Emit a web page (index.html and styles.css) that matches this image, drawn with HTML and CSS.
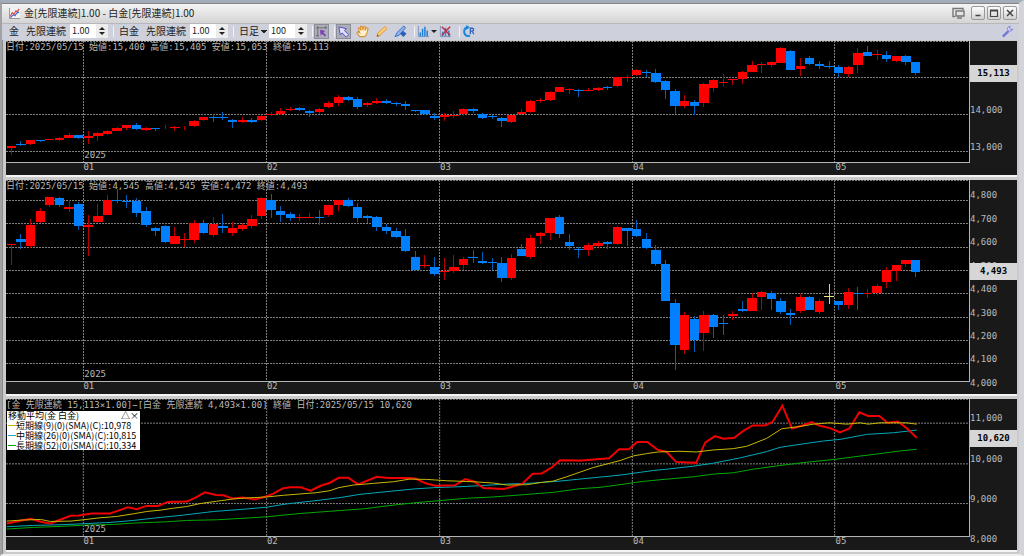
FILE: index.html
```html
<!DOCTYPE html>
<html lang="ja">
	<head>
		<meta charset="UTF-8">
		<title>金[先限連続]1.00 - 白金[先限連続]1.00</title>
		<link rel="stylesheet" href="styles.css">
	</head>
	<body>
		<div class="window">
			<div class="titlebar">
				<svg class="appIcon" viewBox="0 0 12 12">
					<rect x="0" y="0" width="12" height="12" fill="#f2f2f6"/>
					<path d="M.5 0v11.5H12" fill="none" stroke="#8a8a92"/>
					<path d="M1.500 9l2-4 2 2 2-4 1.500 1L11 1" fill="none" stroke="#d8452f" stroke-width="1.200"/>
					<path d="M1.500 10.500l3-3 2 1 2-3 2.500-1" fill="none" stroke="#3b62d8" stroke-width="1.200"/>
				</svg>
				<h1>金[先限連続]1.00 - 白金[先限連続]1.00</h1>
				<button class="dock" title="切り離し">
					<svg viewBox="0 0 13 12"><path d="M3 9.500H1v-8h10v1.500M4 4h8v5H4zM5 11h5" fill="none" stroke="#77777a" stroke-width="1.400"/></svg>
				</button>
				<button class="winBtn" title="最小化">
					<svg viewBox="0 0 12 12"><path d="M3.500 8.500h5" stroke="#444" stroke-width="1.500"/></svg>
				</button>
				<button class="winBtn" title="最大化">
					<svg viewBox="0 0 12 12"><path d="M2.500 3h7v6.500h-7z M2.500 3.800h7" fill="none" stroke="#444" stroke-width="1.200"/></svg>
				</button>
				<button class="winBtn" title="閉じる">
					<svg viewBox="0 0 12 12"><path d="M3 3l6 6M9 3l-6 6" stroke="#444" stroke-width="1.500"/></svg>
				</button>
			</div>

			<div class="toolbar">
				<span class="name">金</span>
				<label for="gold">先限連続</label>
				<span class="spin">
					<input type="text" id="gold" value="1.00">
					<span class="arrows"><button title="増"></button><button class="down" title="減"></button></span>
				</span>
				<i class="sep"></i>
				<span class="name">白金</span>
				<label for="plat">先限連続</label>
				<span class="spin">
					<input type="text" id="plat" value="1.00">
					<span class="arrows"><button title="増"></button><button class="down" title="減"></button></span>
				</span>
				<i class="sep"></i>
				<select class="period" aria-label="足種"><option>日足</option></select>
				<span class="spin">
					<input type="text" id="bars" value="100" aria-label="本数">
					<span class="arrows"><button title="増"></button><button class="down" title="減"></button></span>
				</span>
				<i class="sep"></i>
				<button class="tool on" title="カーソル">
					<svg viewBox="0 0 14 14">
						<path d="M1 3h12M3 1v12M1 11.500h3M11.500 1v3" fill="none" stroke="#6a6a78"/>
						<path d="M5.500 5l5.500 1.500-2 1.500 3 3-1.500 1.500-3-3-1.500 2z" fill="#7a3fb8"/>
					</svg>
				</button>
				<i class="sep"></i>
				<button class="tool on" title="選択">
					<svg viewBox="0 0 14 14"><path d="M2 2l8 2-2 2 4.500 4.500-2.500 2.500-4.500-4.500-2 2z" fill="#dfe2ff" stroke="#4f46c4"/></svg>
				</button>
				<button class="tool" title="移動">
					<svg viewBox="0 0 14 14"><path d="M4 12.500L1 8.500l1-1.500 2 1.500-1.500-5 1.500-.5L5.500 6 5 1.500h1.500L7.500 5.500 8.500 1.500l1.500.5-.3 4L11.500 3l1.500.8-1.500 6-2 2.700z" fill="#fff1d2" stroke="#dc9232" stroke-width="1.200"/></svg>
				</button>
				<button class="tool" title="描画">
					<svg viewBox="0 0 14 14"><path d="M2 12.500l1-4L10.500 1.500l2.500 2.500L5.500 11z" fill="#f9c878" stroke="#e09a35"/><path d="M2 12.500l.6-2.500L4.500 12z" fill="#6b5a48"/></svg>
				</button>
				<button class="tool" title="図形編集">
					<svg viewBox="0 0 14 14"><path d="M1 12.500l2.500-4.500L10.500 1l2 2-7 8z" fill="#8db4ee" stroke="#3768c4"/><path d="M10 6.500l3.500 3-3.500 3.500-3.500-3.500z" fill="#2861b8"/></svg>
				</button>
				<i class="sep"></i>
				<button class="tool menu" title="指標">
					<svg viewBox="0 0 14 14"><path d="M1.500 1v11.500H13" fill="none" stroke="#7b93b8"/><path d="M3.500 8v4M6 4v8M8.500 2v10M11 6v6" stroke="#1f7fd6" stroke-width="1.600"/></svg>
				</button>
				<button class="tool" title="指標削除">
					<svg viewBox="0 0 14 14"><path d="M1.500 1v11.500H13" fill="none" stroke="#7b93b8"/><path d="M4 7v5M7 3v9M10.500 6v6" stroke="#3c86d4" stroke-width="1.800"/><path d="M3 2l9 9M12 2l-9 9" stroke="#c4283c" stroke-width="1.500"/></svg>
				</button>
				<i class="sep"></i>
				<button class="tool" title="更新">
					<svg viewBox="0 0 14 14"><path d="M6 2.500C2 3 1.500 8 3.500 10.500 5 12 7 12 8.500 11.500" fill="none" stroke="#1a86dc" stroke-width="2.200"/><path d="M4.500 0l4 2.500-4 3z" fill="#1a86dc"/><path d="M9 10V3.500h2q1.500 0 1.500 1.500T11 6.500H9M11 6.500l1.700 3.500" fill="none" stroke="#2b63c0" stroke-width="1.400"/></svg>
				</button>
				<button class="tool setting" title="設定">
					<svg viewBox="0 0 14 14"><path d="M2 12.500L8 6.500" stroke="#7477d8" stroke-width="2.600"/><path d="M10 1.500C7 1.500 6.500 4 7.500 5.500c1 1.800 4.500 1.500 5-1.300L10.500 5 9 3.600z" fill="#dfe0fb" stroke="#7477d8"/></svg>
				</button>
			</div>

			<div class="charts">
				<div class="chart chart1">
					<div class="plot" id="plot1">
						<p class="quote">日付:2025/05/15 始値:15,400 高値:15,405 安値:15,053 終値:15,113</p>
					</div>
					<div class="price" id="price1"></div>
					<div class="months" id="months1"></div>
				</div>
				<div class="chart chart2">
					<div class="plot" id="plot2">
						<p class="quote">日付:2025/05/15 始値:4,545 高値:4,545 安値:4,472 終値:4,493</p>
					</div>
					<div class="price" id="price2"></div>
					<div class="months" id="months2"></div>
				</div>
				<div class="chart chart3">
					<div class="plot" id="plot3">
						<p class="quote">[金 先限連続 15,113×1.00]−[白金 先限連続 4,493×1.00] 終値 日付:2025/05/15 10,620</p>
						<div class="legend">
							<p class="head">移動平均(金 白金)<span>△×</span></p>
							<p class="short">短期線(9)(0)(SMA)(C):10,978</p>
							<p class="mid">中期線(26)(0)(SMA)(C):10,815</p>
							<p class="long">長期線(52)(0)(SMA)(C):10,334</p>
						</div>
					</div>
					<div class="price" id="price3"></div>
					<div class="months" id="months3"></div>
				</div>
			</div>
		</div>
		<script src="chart.js"></script>
	</body>
</html>
```

FILE: styles.css
```css
*{
	margin: 0;
	padding: 0;
	box-sizing: border-box;
}
body{
	height: 100vh;
	background: #d3d4da;
	font-family: "Noto Sans CJK JP", sans-serif;
	font-size: 10px;
	color: #222;
}
button{
	padding: 0;
	border: 0;
	background: none;
	font: inherit;
}
svg{
	display: block;
}
.window{
	height: 100vh;
	min-height: 400px;
	display: flex;
	flex-direction: column;
	border-top: 3px solid #a4abb8;
	border-left: 2px solid #a2a2a6;
	border-right: 5px solid #d3d4da;
	border-bottom: 2px solid #f0f0f0;
}
/* タイトルバー */
.titlebar{
	height: 20px;
	flex: none;
	display: flex;
	align-items: center;
	padding: 0 2px 1px 7px;
	border-top: 1px solid #858585;
	background: linear-gradient(#f4f4f4, #d4d4d4);
}
.appIcon{
	width: 11px;
	height: 11px;
	margin-right: 4px;
}
.titlebar h1{
	flex: 1;
	font-size: 10px;
	font-weight: 400;
	line-height: 14px;
}
.titlebar .dock{
	width: 13px;
	margin-right: 4px;
}
.winBtn{
	width: 14px;
	height: 14px;
	margin-left: 2px;
	border: 1px solid #999;
	border-radius: 2px;
	background: linear-gradient(#fdfdfd, #d0d0d0);
}
/* ツールバー */
.toolbar{
	height: 17px;
	flex: none;
	display: flex;
	align-items: center;
	padding: 0 4px 2px 7px;
	border-top: 1px solid #b8b8bc;
	background: #ced1dc;
	line-height: 14px;
}
.toolbar .name{
	margin-right: 7px;
}
.toolbar label{
	margin-right: 4px;
}
.spin{
	display: flex;
	width: 38px;
	height: 14px;
	background: #fff;
}
.spin input{
	width: 26px;
	padding-left: 2px;
	border: 0;
	background: #fff;
	font: inherit;
	font-size: 9px;
	color: #222;
}
.arrows{
	width: 12px;
	display: flex;
	flex-direction: column;
	justify-content: center;
	gap: 2px;
	background: #ececec;
}
.arrows button::after{
	content: "";
	display: block;
	width: 0;
	margin: 0 auto;
	border: 3px solid transparent;
	border-top-width: 0;
	border-bottom-color: #222;
}
.arrows .down::after{
	border-top: 3px solid #222;
	border-bottom: 0;
}
.sep{
	width: 1px;
	height: 11px;
	margin: 0 5px;
	background: #f2f2f5;
}
.period{
	width: 30px;
	border: 0;
	appearance: none;
	font: inherit;
	color: #222;
	background: linear-gradient(to top right, transparent 50%, #222 50%) no-repeat 22px 6px / 3px 3px, linear-gradient(to top left, transparent 50%, #222 50%) no-repeat 25px 6px / 3px 3px;
}
.tool{
	width: 15px;
	height: 15px;
	margin-right: 4px;
	flex: none;
}
.tool svg{
	width: 13px;
	height: 13px;
	margin: 1px;
}
.tool.on{
	margin-right: 0;
	background: #adaeb8;
	border: 1px solid #8c8d96;
}
.tool.on svg{
	margin: 0;
}
.tool.on + .tool{
	margin-left: 4px;
}
.tool + .sep{
	margin-left: 2px;
}
.tool.on + .sep{
	margin-left: 5px;
}
.sep + .tool{
	margin-left: -4px;
}
.tool.menu{
	position: relative;
	margin-right: 7px;
}
.tool.menu::after{
	content: "";
	position: absolute;
	left: 15px;
	top: 6px;
	border: 3px solid transparent;
	border-top-color: #222;
	border-bottom: 0;
}
.tool.setting{
	margin: 0 0 0 auto;
}
/* チャート */
.charts{
	flex: 1;
	min-height: 0;
	display: flex;
	flex-direction: column;
	gap: 5px;
	padding: 1px 2px 4px 3px;
	background: #cacaca;
	border-left: 1px solid #8c8c8c;
}
.chart{
	display: grid;
	grid-template-columns: minmax(0, 1fr) 47px;
	grid-template-rows: minmax(0, 1fr) 12px;
	background: #191919;
	color: #b9b9b9;
	font-family: "DejaVu Sans Mono", "Noto Sans CJK JP", monospace;
	font-size: 9px;
	line-height: 10px;
	box-shadow: 0 2px #f4f4f4;
}
.chart1{
	flex: 134 0 0px;
}
.chart2{
	flex: 214 0 0px;
}
.chart3{
	flex: 151 0 0px;
	grid-template-rows: minmax(0, 1fr) 13px;
}
.plot{
	position: relative;
	background: #000;
	border-right: 1px solid #b4b4b4;
	border-bottom: 1px solid #b4b4b4;
}
.plot svg{
	position: absolute;
	width: 100%;
	height: 100%;
}
.plot svg *{
	vector-effect: non-scaling-stroke;
	fill: none;
}
.plot .grid{
	stroke: #808080;
	stroke-dasharray: 2 1;
	shape-rendering: crispEdges;
}
.plot .wick,
.plot rect{
	shape-rendering: crispEdges;
}
.plot .r{
	stroke: #b40000;
}
.plot rect.r{
	stroke: none;
	fill: #ff0000;
}
.plot .b{
	stroke: #0060b8;
}
.plot rect.b{
	stroke: none;
	fill: #0080ff;
}
.plot .y{
	stroke: #d8d860;
}
.plot rect.y{
	stroke: none;
	fill: #e8e880;
}
.plot .close{
	stroke: #f00000;
	stroke-width: 2px;
}
.plot .sma9{
	stroke: #c8b800;
}
.plot .sma26{
	stroke: #00a8b8;
}
.plot .sma52{
	stroke: #00a800;
}
.quote{
	position: absolute;
	left: 0;
	top: 1px;
	z-index: 1;
	white-space: nowrap;
}
.year{
	position: absolute;
	bottom: 2px;
	margin-left: 1px;
}
.months{
	position: relative;
	line-height: 9px;
}
.months span{
	position: absolute;
	top: 0;
}
.price{
	position: relative;
}
.price span{
	position: absolute;
	left: 0;
}
.price strong{
	position: absolute;
	left: 0;
	right: 0;
	height: 17px;
	margin-bottom: -8px;
	line-height: 16px;
	text-align: center;
	background: #d6d6d6;
	color: #000;
	font-weight: 700;
}
.legend{
	position: absolute;
	left: 1px;
	top: 12px;
	z-index: 1;
	width: 133px;
	display: flex;
	flex-direction: column;
	gap: 1px;
	padding: 0 1px;
	background: #fff;
	color: #000;
	font-family: "Noto Sans CJK JP", sans-serif;
	line-height: 9px;
	white-space: nowrap;
}
.legend p{
	display: flex;
	align-items: center;
}
.legend .head{
	justify-content: space-between;
}
.legend .short::before,
.legend .mid::before,
.legend .long::before{
	content: "";
	width: 8px;
	height: 1px;
	background: #c8b800;
}
.legend .mid::before{
	background: #20a8d0;
}
.legend .long::before{
	background: #00a800;
}
```

FILE: chart.js
```js
// 1本 = [色, 高値, 実体上, 実体下, 安値]  (座標はviewBox基準)
var gold = [
	"r 261 262 267 288", "b 245 255 258 261", "r 242 243 255 258", "b 242 243 246 249", "r 240 240 243 243",
	"r 233 237 243 244", "r 221 226 235 237", "b 226 226 235 238", "r 216 230 235 256", "r 219 221 231 245",
	"r 212 216 225 226", "r 203 207 214 215", "r 197 198 207 211", "b 190 198 210 213", "r 203 205 211 214",
	"b 205 207 210 216", "r 197 205 207 210", "r 200 203 207 215", "r 199 202 204 213", "r 182 186 199 203",
	"r 172 174 183 185", "b 165 174 176 187", "b 159 174 177 182", "b 180 181 187 206", "r 174 183 187 191",
	"b 177 183 188 190", "r 168 169 183 185", "r 158 165 168 171", "r 147 154 164 166", "r 142 149 152 156",
	"b 144 146 151 156", "b 152 154 161 172", "r 147 150 159 165", "r 123 132 144 145", "r 106 113 130 139",
	"b 109 111 121 123", "b 113 117 143 149", "r 128 132 138 143", "r 116 125 132 135", "b 118 123 132 133",
	"b 126 130 135 140", "b 125 135 139 153", "b 153 153 156 158", "b 151 152 165 167", "b 161 169 176 182",
	"r 162 168 173 185", "r 154 168 171 175", "r 147 149 164 171", "b 146 150 156 160", "b 162 164 177 180",
	"b 166 171 174 180", "b 174 176 186 202", "r 166 168 187 190", "r 149 159 164 166", "r 122 124 159 162",
	"r 114 120 123 132", "r 95 97 122 125", "r 82 83 96 98", "r 85 89 92 103", "b 88 91 94 113",
	"r 86 90 94 95", "r 83 85 90 94", "b 80 83 85 91", "r 51 52 79 82", "r 46 53 56 67",
	"r 27 32 46 50", "b 30 37 41 52", "b 29 39 67 69", "b 62 63 91 118", "b 88 94 141 164",
	"r 106 125 139 146", "b 121 128 141 166", "r 70 73 130 144", "r 58 61 86 98", "r 44 67 70 78",
	"r 57 57 60 77", "r 35 37 57 72", "r 3 15 36 37", "r 8 12 15 41", "r 3 6 15 22",
	"r -38 -35 9 11", "b -31 -28 32 32", "r -6 18 29 50", "b -12 -6 12 17", "b 3 13 19 29",
	"b 5 19 22 29", "b 16 21 39 53", "r 18 21 42 53", "r -37 -21 17 41", "b -43 -24 -12 -11",
	"r -31 -18 -15 1", "b -26 -16 -3 7", "r -12 -11 5 6", "b -15 -13 7 15", "b 7 8 41 45"
];
var platinum = [
	"r 204 205 207 268", "b 176 190 199 220", "r 130 147 210 218", "r 97 104 138 142", "r 63 64 87 94",
	"b 64 66 87 92", "r 72 92 98 109", "b 78 84 150 163", "r 118 147 153 242", "r 84 121 138 143",
	"r 58 71 117 119", "b 39 72 75 80", "b 57 75 78 96", "b 66 75 112 125", "b 92 104 147 154",
	"b 153 156 165 180", "b 149 150 199 203", "r 154 181 204 206", "r 172 189 192 214", "r 132 141 192 201",
	"b 134 143 171 174", "r 123 145 177 184", "b 116 150 156 171", "r 139 156 171 180", "r 142 149 159 166",
	"r 118 129 150 158", "r 64 66 122 129", "b 55 73 103 126", "b 89 105 117 140", "b 108 113 128 137",
	"r 114 123 126 135", "r 111 123 126 126", "b 101 125 128 148", "r 86 88 119 124", "r 72 73 87 104",
	"b 65 73 89 94", "b 80 94 127 139", "b 118 121 127 142", "b 121 125 153 167", "b 145 153 165 174",
	"b 156 166 185 186", "b 159 181 227 229", "b 226 243 284 285", "r 237 269 272 278", "b 245 274 294 300",
	"r 248 285 288 312", "r 238 274 287 291", "r 245 250 268 283", "b 223 245 248 262", "b 229 257 262 266",
	"b 248 259 262 284", "b 245 262 307 320", "r 235 246 307 312", "b 204 219 240 241", "r 178 188 244 250",
	"r 170 172 180 206", "r 126 128 172 194", "b 118 125 175 187", "b 175 198 210 222", "b 213 219 223 248",
	"r 202 209 223 242", "r 195 203 211 213", "b 197 200 206 219", "r 152 154 204 208", "b 156 157 165 210",
	"b 132 159 180 184", "b 172 190 216 219", "b 209 223 264 271", "b 254 265 376 376", "b 372 382 508 585",
	"r 411 420 525 537", "b 423 430 495 532", "r 406 420 474 528", "b 415 420 455 488", "b 418 442 445 478",
	"r 406 417 423 435", "b 378 402 408 411", "r 352 369 407 408", "r 348 349 364 403", "b 346 353 372 403",
	"b 367 378 411 415", "b 402 414 420 449", "r 355 365 407 412", "b 363 364 403 405", "r 372 378 411 417",
	"y 325 362 365 385", "b 377 378 388 405", "r 339 349 388 400", "b 335 353 356 403", "r 342 353 356 367",
	"r 325 332 354 360", "r 274 284 321 338", "r 269 269 287 317", "r 252 252 264 274", "b 252 252 288 305"
];
var lines = {
	sma52: "20,408 100,403 180,400 260,396 340,394 400,390 500,386 560,382 650,380 720,376 800,371 900,361 1020,352 1090,347 1160,338 1240,329 1320,322 1400,315 1480,311 1560,305 1660,297 1740,286 1800,282 1880,271 1920,265 1980,259 2080,250 2140,242 2200,238 2260,227 2340,216 2420,206 2500,198 2560,190 2640,180 2700,172 2750,167",
	sma26: "20,401 100,397 180,395 250,392 330,388 400,382 470,374 540,367 640,355 720,349 800,342 860,332 940,323 1020,313 1080,303 1160,295 1240,287 1300,283 1380,280 1440,277 1520,272 1600,269 1680,263 1780,253 1860,245 1960,231 2010,226 2080,218 2140,209 2220,193 2300,174 2340,161 2400,152 2470,142 2520,137 2600,122 2680,117 2750,109",
	close: "20,391 64,382 93,377 122,386 151,391 180,380 212,368 237,367 275,361 330,361 353,353 383,342 411,348 439,338 474,338 503,326 560,325 585,314 615,297 648,305 670,306 698,316 728,313 765,319 800,309 820,301 848,285 870,282 902,282 932,292 960,278 990,268 1016,253 1045,253 1074,273 1130,250 1165,254 1228,254 1248,256 1275,269 1305,277 1365,276 1396,257 1423,265 1450,284 1512,287 1567,271 1598,241 1625,240 1655,222 1680,200 1745,201 1827,194 1857,167 1887,167 1911,145 1942,145 1972,168 2000,175 2028,205 2088,208 2116,146 2145,127 2170,135 2203,132 2230,111 2258,95 2295,95 2318,84 2347,35 2376,104 2405,96 2435,85 2460,96 2490,103 2520,116 2548,104 2578,55 2604,66 2638,66 2662,87 2694,83 2720,103 2750,132",
	sma9: "20,384 64,381 122,379 151,385 212,384 250,380 300,374 350,370 400,362 440,355 480,351 520,345 560,340 600,331 650,324 700,317 740,314 800,311 850,306 900,302 950,298 990,292 1016,283 1060,275 1120,270 1180,265 1230,257 1280,258 1340,262 1420,265 1480,269 1520,275 1580,274 1625,267 1660,263 1700,250 1780,222 1860,201 1900,187 1940,180 1975,175 2040,173 2090,175 2140,169 2200,165 2240,158 2300,134 2345,105 2400,98 2440,91 2490,87 2540,91 2580,87 2605,91 2640,87 2720,87 2750,91"
};
var months = {"01": 250, "02": 800, "03": 1319, "04": 1897, "05": 2504};
var LEFT = 18, WIDTH = 2889;

function pct(x){
	return (x - LEFT) / WIDTH * 100 + "%";
}

// prices = [[ラベル, y], ...]  ラベルが空なら線だけ
function draw(no, top, height, prices, now, candles, series){
	var plot = document.getElementById("plot" + no);
	var price = document.getElementById("price" + no);
	var axis = document.getElementById("months" + no);
	var right = LEFT + WIDTH;
	var bottom = top + height;
	var s = "";
	var labels = "";
	var names = "";

	prices.forEach(function(p){
		if(p[1] < bottom){
			s += '<path class="grid" d="M' + LEFT + ' ' + p[1] + 'H' + right + '"/>';
		}
		if(p[0]){
			labels += '<span style="bottom:' + (bottom - p[1]) / height * 100 + '%">' + p[0] + '</span>';
		}
	});
	labels += '<strong style="bottom:' + (bottom - now[1]) / height * 100 + '%">' + now[0] + '</strong>';

	s += '<path class="grid" d="M' + LEFT + ' ' + (top + 1) + 'H' + right + '"/>';
	for(var m in months){
		s += '<path class="grid" d="M' + months[m] + ' ' + top + 'V' + bottom + '"/>';
		names += '<span style="left:' + pct(months[m]) + '">' + m + '</span>';
	}

	(candles || []).forEach(function(row, i){
		var c = row.split(" ");
		var x = 34 + i * 28.86;
		s += '<path class="wick ' + c[0] + '" d="M' + x + ' ' + c[1] + 'V' + c[4] + '"/>';
		s += '<rect class="' + c[0] + '" x="' + (x - 14) + '" y="' + c[2] + '" width="28" height="' + (c[3] - c[2]) + '"/>';
	});
	for(var k in series){
		s += '<polyline class="' + k + '" points="' + series[k] + '"/>';
	}

	plot.insertAdjacentHTML("afterbegin",
		'<svg viewBox="' + [LEFT, top, WIDTH, height].join(" ") + '" preserveAspectRatio="none">' + s + '</svg>' +
		'<span class="year" style="left:' + pct(months["01"]) + '">2025</span>');
	price.innerHTML = labels;
	axis.innerHTML = names;
}

draw(1, -57, 366, [["", 52], ["14,000", 165], ["13,000", 277]], ["15,113", 41], gold);
draw(2, 12, 606, [["4,800", 73], ["4,700", 143], ["4,600", 214], ["4,500", 284], ["4,400", 354], ["4,300", 427], ["4,200", 496], ["4,100", 565], ["4,000", 637]], ["4,493", 289], platinum);
draw(3, 15, 414, [["11,000", 88], ["10,000", 211], ["9,000", 331], ["8,000", 451]], ["10,620", 134], null, lines);
```
